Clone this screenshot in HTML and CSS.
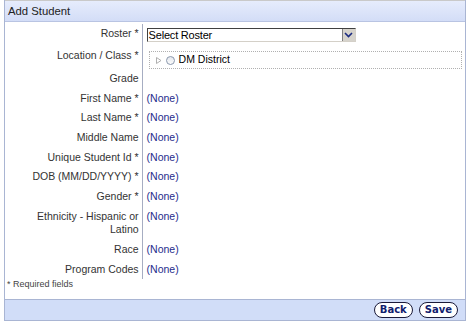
FILE: index.html
```html
<!DOCTYPE html>
<html lang="en">
<head>
<meta charset="UTF-8" />
<title>Add Student</title>
<link rel="stylesheet" href="styles.css">
</head>
<body>
  <div class="panel">
    <div class="panel-head">Add Student</div>

    <div class="panel-body">
      <table class="form">
        <tr class="row-roster">
          <td class="lbl">Roster *</td>
          <td class="val">
            <div class="select">
              <span class="select-text">Select Roster</span>
              <span class="select-btn">
                <svg width="9" height="6" viewBox="0 0 9 6"><path d="M1 1 L4.5 4.5 L8 1" fill="none" stroke="#1a2a80" stroke-width="1.6"/></svg>
              </span>
            </div>
          </td>
        </tr>
        <tr class="row-location">
          <td class="lbl">Location / Class *</td>
          <td class="val">
            <div class="tree">
              <svg class="tree-arrow" width="6" height="7" viewBox="0 0 6 7"><path d="M0.5 0.5 L5 3.5 L0.5 6.5 Z" fill="none" stroke="#b0b0b0" stroke-width="1"/></svg>
              <span class="radio"></span>
              <span>DM District</span>
            </div>
          </td>
        </tr>
        <tr class="row-grade">
          <td class="lbl">Grade</td>
          <td class="val"></td>
        </tr>
        <tr><td class="lbl">First Name *</td><td class="val none">(None)</td></tr>
        <tr><td class="lbl">Last Name *</td><td class="val none">(None)</td></tr>
        <tr><td class="lbl">Middle Name</td><td class="val none">(None)</td></tr>
        <tr><td class="lbl">Unique Student Id *</td><td class="val none">(None)</td></tr>
        <tr><td class="lbl">DOB (MM/DD/YYYY) *</td><td class="val none">(None)</td></tr>
        <tr><td class="lbl">Gender *</td><td class="val none">(None)</td></tr>
        <tr><td class="lbl">Ethnicity - Hispanic or Latino</td><td class="val none">(None)</td></tr>
        <tr><td class="lbl">Race</td><td class="val none">(None)</td></tr>
        <tr><td class="lbl">Program Codes</td><td class="val none">(None)</td></tr>
      </table>
      <div class="note">* Required fields</div>
    </div>

    <div class="panel-foot">
      <button class="pill">Back</button>
      <button class="pill">Save</button>
    </div>
  </div>
</body>
</html>
```

FILE: styles.css
```css
body {
  margin: 0;
  font-family: Tahoma, 'Liberation Sans', Arial, sans-serif;
  font-size: 10.5px;
  color: #333;
  background: white;
}

.panel {
  margin: 0 2px 0 4px;
  border-left: 1px solid #a9b5d3;
  border-right: 1px solid #a9b5d3;
}

.panel-head {
  height: 20px;
  line-height: 20px;
  padding-left: 3px;
  font-size: 11.3px;
  color: #222;
  border-top: 1px solid #c9c9c9;
  border-bottom: 1px solid #b9c4e2;
  background: linear-gradient(#e6ecfc, #d3ddf7);
}

.panel-body {
  padding: 2px 0 9px 0;
}

.form {
  border-collapse: collapse;
}

.form td {
  padding: 3px 3px 3px 4px;
  line-height: 13.67px;
  vertical-align: top;
}

.lbl {
  width: 131px;
  text-align: right;
  border-right: 1px solid #a6adc2;
}

.val {
  width: 318px;
}

.none {
  color: #1e2b8c;
}

.row-roster td {
  padding-bottom: 4px;
}

.row-location .val {
  padding-top: 5px;
  padding-bottom: 0;
}

.row-location .lbl {
  padding-bottom: 0;
}

.row-grade td {
  padding-top: 3px;
  padding-bottom: 3px;
}

.select {
  display: flex;
  width: 207px;
  height: 12px;
  border: 1px solid;
  border-color: #404040 #d4d0c8 #d4d0c8 #404040;
  background: white;
  color: black;
  font-size: 11px;
  line-height: 12px;
  margin-top: 1px;
}

.select-text {
  flex: 1;
  padding-left: 1px;
  font-family: Arial, 'Liberation Sans', sans-serif;
  letter-spacing: -0.2px;
}

.select-btn {
  width: 12px;
  height: 12px;
  display: flex;
  align-items: center;
  justify-content: center;
  background: #d6d3cc;
  border-left: 1px solid #808080;
}

.tree {
  display: flex;
  align-items: center;
  gap: 3px;
  margin-left: 2px;
  height: 16px;
  padding-left: 6px;
  border: 1px dotted #b0b0b0;
  color: black;
}

.radio {
  width: 7px;
  height: 7px;
  border: 1px solid #8b98ad;
  border-radius: 50%;
  background: linear-gradient(#e4e8ee, #fbfbfb);
  margin: 0 1px 0 1px;
}

.note {
  font-size: 9px;
  line-height: 11px;
  color: #444;
  padding-left: 2px;
}

.panel-foot {
  display: flex;
  justify-content: flex-end;
  gap: 6px;
  height: 20px;
  align-items: center;
  padding-right: 7px;
  background: #d1ddf8;
  border-top: 1px solid #a9b5d3;
  border-bottom: 1px solid #a9b5d3;
}

.pill {
  font-family: 'DejaVu Sans', Verdana, sans-serif;
  font-weight: bold;
  font-size: 10px;
  color: #10206e;
  background: white;
  border: 1px solid #1a1a3a;
  border-radius: 8px;
  padding: 0 5px;
  height: 16px;
  line-height: 14px;
}
```
